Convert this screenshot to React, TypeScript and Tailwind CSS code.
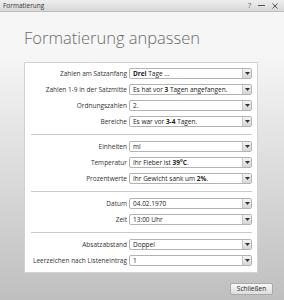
import React from "react";

type Row = { label: string; value: React.ReactNode };

const groups: Row[][] = [
    [
        { label: "Zahlen am Satzanfang", value: <><b>Drei</b> Tage ...</> },
        { label: "Zahlen 1-9 in der Satzmitte", value: <>Es hat vor <b>3</b> Tagen angefangen.</> },
        { label: "Ordnungszahlen", value: <>2.</> },
        { label: "Bereiche", value: <>Es war vor <b>3-4</b> Tagen.</> },
    ],
    [
        { label: "Einheiten", value: <>ml</> },
        { label: "Temperatur", value: <>Ihr Fieber ist <b>39°C</b>.</> },
        { label: "Prozentwerte", value: <>Ihr Gewicht sank um <b>2%</b>.</> },
    ],
    [
        { label: "Datum", value: <>04.02.1970</> },
        { label: "Zeit", value: <>13:00 Uhr</> },
    ],
    [
        { label: "Absatzabstand", value: <>Doppel</> },
        { label: "Leerzeichen nach Listeneintrag", value: <>1</> },
    ],
];

function SelectBox({ children }: { children: React.ReactNode }) {
    return (
        <div className="flex-1 h-[11px] flex items-stretch border border-[#b3b3b3] rounded-[2px] bg-white overflow-hidden">
            <div className="flex-1 pl-[3px] leading-[9px] text-[6.5px] text-[#222] whitespace-nowrap overflow-hidden [&_b]:font-bold">
                {children}
            </div>
            <div className="w-[9px] flex items-center justify-center border-l border-[#c4c4c4] bg-gradient-to-b from-[#f4f4f4] to-[#d6d6d6]">
                <svg width="5" height="3" viewBox="0 0 5 3">
                    <path d="M0 0 L5 0 L2.5 3 Z" fill="#333" />
                </svg>
            </div>
        </div>
    );
}

export default function App() {
    return (
        <div className="w-[284px] h-[300px] flex flex-col bg-gradient-to-b from-[#f6f6f6] from-[18%] to-[#bfbfbf] font-['Open_Sans',sans-serif] overflow-hidden">
            {/* title bar */}
            <div className="h-[12px] flex items-center justify-between px-[3px] bg-gradient-to-b from-[#eeeeee] to-[#d9d9d9] border-b border-[#bcbcbc]">
                <span className="text-[6.5px] text-[#333]">Formatierung</span>
                <div className="flex items-center gap-[7px] pr-[3px] text-[#555]">
                    <span className="text-[7px] leading-none">?</span>
                    <span className="block w-[7px] h-[1px] bg-[#555]" />
                    <svg width="6" height="6" viewBox="0 0 6 6">
                        <path d="M0.5 0.5 L5.5 5.5 M5.5 0.5 L0.5 5.5" stroke="#555" strokeWidth="1" />
                    </svg>
                </div>
            </div>

            <h1 className="ml-[24px] mt-[15px] text-[16.5px] leading-[22px] font-light text-[#6a6a6a]">
                Formatierung anpassen
            </h1>

            <div className="ml-[24px] mt-[13px] w-[234px] bg-white border border-[#d2d2d2] pt-[5px] pb-[6px] pr-[5px] flex flex-col">
                {groups.map((rows, gi) => (
                    <React.Fragment key={gi}>
                        {gi > 0 && <div className="ml-[6px] mt-[7px] mb-[6px] h-[1px] bg-[#c9c9c9]" />}
                        <div className="flex flex-col gap-[5px]">
                            {rows.map((r) => (
                                <div key={r.label} className="flex items-center gap-[2px]">
                                    <div className="w-[102px] text-right text-[6.5px] text-[#333] whitespace-nowrap">
                                        {r.label}
                                    </div>
                                    <SelectBox>{r.value}</SelectBox>
                                </div>
                            ))}
                        </div>
                    </React.Fragment>
                ))}
            </div>

            <div className="flex justify-end pr-[11px] mt-[10px]">
                <button className="w-[43px] h-[12px] border border-[#a9a9a9] rounded-[2px] bg-gradient-to-b from-[#f7f7f7] to-[#dedede] text-[6.5px] text-[#222] leading-none">
                    Schließen
                </button>
            </div>
        </div>
    );
}
